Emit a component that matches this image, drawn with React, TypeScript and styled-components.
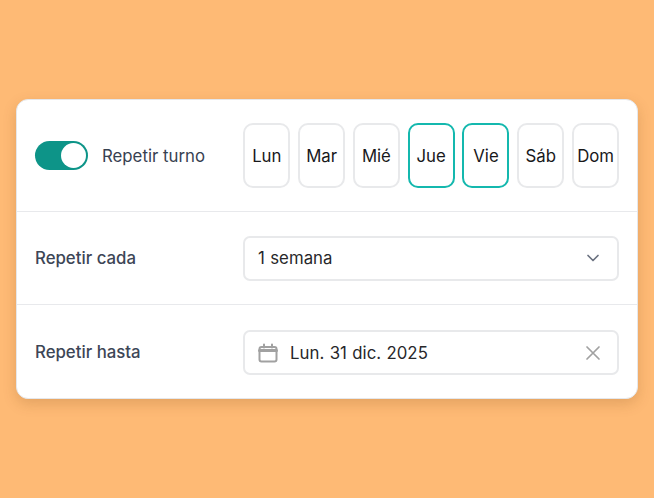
import React from 'react'
import styled, { createGlobalStyle } from 'styled-components'

const GlobalStyle = createGlobalStyle`
  html, body { margin: 0; padding: 0; }
  body { background: #feba75; font-family: Inter, "Liberation Sans", sans-serif; }
`

const Page = styled.div`
  width: 654px;
  height: 498px;
  box-sizing: border-box;
  padding: 99px 16px;
  background: #feba75;
`

const Card = styled.section`
  width: 622px;
  height: 300px;
  box-sizing: border-box;
  display: flex;
  flex-direction: column;
  background: #fff;
  border: 1px solid #e5e7eb;
  border-radius: 12px;
  box-shadow: 0 5px 14px rgba(120, 70, 20, 0.2);
`

const Field = styled.div`
  width: 376px;
  height: 45px;
  box-sizing: border-box;
  display: flex;
  align-items: center;
  gap: 12px;
  padding: 0 16px 0 13px;
  border: 2px solid #e8e9eb;
  border-radius: 7px;
  font-size: 16.8px;
  letter-spacing: 0.05px;
  word-spacing: 0.5px;
  color: #27272a;
`

const Row = styled.div<{ $height: number }>`
  height: ${(p) => p.$height}px;
  flex: none;
  box-sizing: border-box;
  display: flex;
  align-items: center;
  padding: 0 18px;
  border-bottom: 1px solid #e8e9ec;

  &:last-child {
    border-bottom: 0;

    > ${Field} { margin-top: 2px; }
  }
`

const Left = styled.div`
  width: 208px;
  flex: none;
  display: flex;
  align-items: center;
  gap: 14px;
`

const Toggle = styled.div`
  width: 53px;
  height: 29px;
  box-sizing: border-box;
  display: flex;
  justify-content: flex-end;
  align-items: center;
  padding-right: 2px;
  border-radius: 15px;
  background: #0d9488;

  &::after {
    content: '';
    width: 25px;
    height: 25px;
    border-radius: 50%;
    background: #fff;
  }
`

const ToggleLabel = styled.span`
  font-size: 16.8px;
  color: #374151;
`

const FieldLabel = styled.span`
  font-size: 16.8px;
  font-weight: 500;
  color: #3d4656;
`

const Days = styled.div`
  display: flex;
  gap: 7.8px;
  margin-left: 0.3px;
`

const Day = styled.button<{ $on?: boolean }>`
  width: 47px;
  height: 65px;
  padding: 0;
  box-sizing: border-box;
  font: 400 16.8px Inter, "Liberation Sans", sans-serif;
  color: #18181b;
  background: #fff;
  border: 2px solid ${(p) => (p.$on ? '#14b8ae' : '#e8e9eb')};
  border-radius: 10px;
`

const Value = styled.span`
  flex: 1;
`

const Icon = styled.svg`
  flex: none;
  display: block;
  fill: none;
  stroke-linecap: round;
  stroke-linejoin: round;
`

const days = ['Lun', 'Mar', 'Mié', 'Jue', 'Vie', 'Sáb', 'Dom']
const active = ['Jue', 'Vie']

export default function App() {
  return (
    <Page>
      <GlobalStyle />
      <Card>
        <Row $height={112}>
          <Left>
            <Toggle />
            <ToggleLabel>Repetir turno</ToggleLabel>
          </Left>
          <Days>
            {days.map((d) => (
              <Day key={d} $on={active.includes(d)}>{d}</Day>
            ))}
          </Days>
        </Row>
        <Row $height={93}>
          <Left>
            <FieldLabel>Repetir cada</FieldLabel>
          </Left>
          <Field>
            <Value>1 semana</Value>
            <Icon width="16" height="16" viewBox="0 0 16 16" stroke="#6b7280" strokeWidth="1.7">
              <path d="M3 5.5 8 10.5 13 5.5" />
            </Icon>
          </Field>
        </Row>
        <Row $height={93}>
          <Left>
            <FieldLabel>Repetir hasta</FieldLabel>
          </Left>
          <Field>
            <Icon width="20" height="20" viewBox="0 0 20 20" stroke="#a1a1a1" strokeWidth="2">
              <rect x="1.5" y="4" width="17" height="14.5" rx="2" />
              <path d="M1.5 7.5h17" strokeWidth="3" />
              <path d="M6 1.5v3M14 1.5v3" />
            </Icon>
            <Value>Lun. 31 dic. 2025</Value>
            <Icon width="16" height="16" viewBox="0 0 16 16" stroke="#a1a1a1" strokeWidth="1.7">
              <path d="M2 2 14 14M14 2 2 14" />
            </Icon>
          </Field>
        </Row>
      </Card>
    </Page>
  )
}
